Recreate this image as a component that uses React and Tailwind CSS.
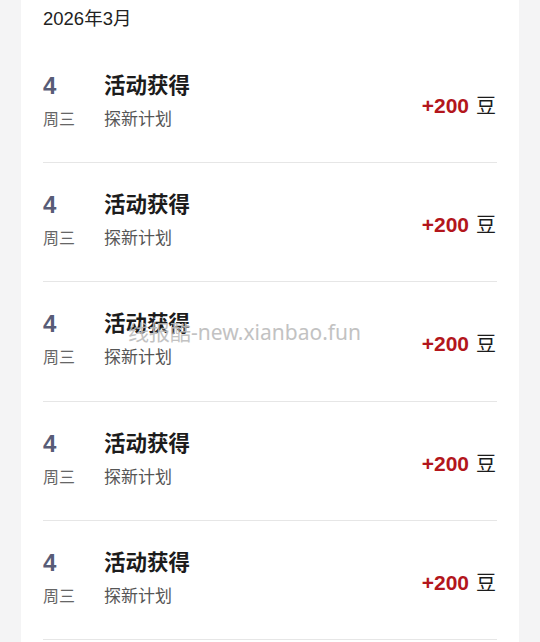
import React from "react";

const rows = Array.from({ length: 5 }, () => ({
  day: "4",
  week: "周三",
  title: "活动获得",
  sub: "探新计划",
  amount: "+200",
}));

export default function App() {
  return (
    <div
      className="relative w-[540px] h-[642px] overflow-hidden bg-[#f4f4f5]"
      style={{ fontFamily: '"Liberation Sans", "Noto Sans CJK SC", sans-serif' }}
    >
      <div className="ml-[21px] w-[498px] h-full bg-white px-[22px]">
        <div className="h-[43.75px] pt-[7px] text-[18.5px] leading-[24px] text-[#222]">
          2026年3月
        </div>
        {rows.map((r, i) => (
          <div
            key={i}
            className="flex items-center h-[119.25px] border-b border-[#e6e6e6]"
          >
            <div className="w-[61px] flex flex-col pb-[3px]">
              <div className="text-[24px] leading-[28px] font-bold text-[#585c77]">
                {r.day}
              </div>
              <div className="mt-[9px] text-[16px] leading-[22px] text-[#666]">
                {r.week}
              </div>
            </div>
            <div className="flex-1 flex flex-col pb-[3px]">
              <div className="text-[21.5px] leading-[28px] font-bold text-[#1c1c1c]">
                {r.title}
              </div>
              <div className="mt-[9px] text-[17px] leading-[22px] text-[#555]">
                {r.sub}
              </div>
            </div>
            <div className="flex items-center mt-[6px] pr-[1px]">
              <span className="text-[21px] leading-[26px] font-bold text-[#b3161c]">
                {r.amount}
              </span>
              <span className="ml-[7px] text-[20px] leading-[26px] text-[#1c1c1c]">
                豆
              </span>
            </div>
          </div>
        ))}
      </div>
      <div
        className="absolute left-[128px] top-[318px] text-[21px] leading-[28px] text-[#bcbcbc] opacity-90 pointer-events-none whitespace-nowrap"
        style={{ fontFamily: '"Noto Sans", "Noto Sans CJK SC", sans-serif' }}
      >
        线报酷-new.xianbao.fun
      </div>
    </div>
  );
}
